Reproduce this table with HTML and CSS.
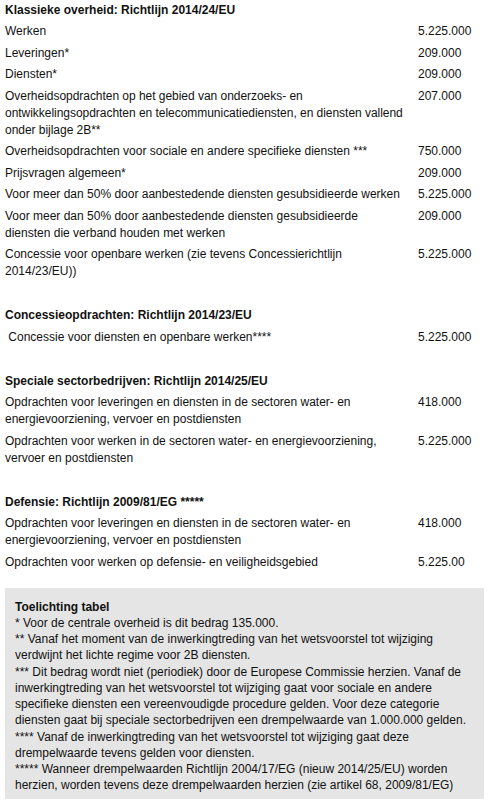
FILE: index.html
```html
<!DOCTYPE html>
<html lang="nl">
<head>
<meta charset="utf-8">
<title>Drempelwaarden</title>
<link rel="stylesheet" href="styles.css">
</head>
<body>
<div class="page">
  <table class="sect">
    <colgroup><col class="c1"><col class="c2"></colgroup>
    <tr class="head"><th colspan="2">Klassieke overheid: Richtlijn 2014/24/EU</th></tr>
    <tr><td class="lbl">Werken</td><td class="num">5.225.000</td></tr>
    <tr><td class="lbl">Leveringen*</td><td class="num">209.000</td></tr>
    <tr><td class="lbl">Diensten*</td><td class="num">209.000</td></tr>
    <tr><td class="lbl tight">Overheidsopdrachten op het gebied van onderzoeks- en ontwikkelingsopdrachten en telecommunicatiediensten, en diensten vallend onder bijlage 2B**</td><td class="num">207.000</td></tr>
    <tr><td class="lbl">Overheidsopdrachten voor sociale en andere specifieke diensten ***</td><td class="num">750.000</td></tr>
    <tr><td class="lbl">Prijsvragen algemeen*</td><td class="num">209.000</td></tr>
    <tr><td class="lbl">Voor meer dan 50% door aanbestedende diensten gesubsidieerde werken</td><td class="num">5.225.000</td></tr>
    <tr><td class="lbl">Voor meer dan 50% door aanbestedende diensten gesubsidieerde diensten die verband houden met werken</td><td class="num">209.000</td></tr>
    <tr><td class="lbl">Concessie voor openbare werken (zie tevens Concessierichtlijn 2014/23/EU))</td><td class="num">5.225.000</td></tr>
  </table>

  <table class="sect">
    <colgroup><col class="c1"><col class="c2"></colgroup>
    <tr class="head"><th colspan="2">Concessieopdrachten: Richtlijn 2014/23/EU</th></tr>
    <tr><td class="lbl">&nbsp;Concessie voor diensten en openbare werken****</td><td class="num">5.225.000</td></tr>
  </table>

  <table class="sect">
    <colgroup><col class="c1"><col class="c2"></colgroup>
    <tr class="head"><th colspan="2">Speciale sectorbedrijven: Richtlijn 2014/25/EU</th></tr>
    <tr><td class="lbl">Opdrachten voor leveringen en diensten in de sectoren water- en energievoorziening, vervoer en postdiensten</td><td class="num">418.000</td></tr>
    <tr><td class="lbl">Opdrachten voor werken in de sectoren water- en energievoorziening, vervoer en postdiensten</td><td class="num">5.225.000</td></tr>
  </table>

  <table class="sect last">
    <colgroup><col class="c1"><col class="c2"></colgroup>
    <tr class="head"><th colspan="2">Defensie: Richtlijn 2009/81/EG *****</th></tr>
    <tr><td class="lbl">Opdrachten voor leveringen en diensten in de sectoren water- en energievoorziening, vervoer en postdiensten</td><td class="num">418.000</td></tr>
    <tr><td class="lbl">Opdrachten voor werken op defensie- en veiligheidsgebied</td><td class="num">5.225.00</td></tr>
  </table>

  <div class="note">
    <strong>Toelichting tabel</strong><br>
    * Voor de centrale overheid is dit bedrag 135.000.<br>
    ** Vanaf het moment van de inwerkingtreding van het wetsvoorstel tot wijziging verdwijnt het lichte regime voor 2B diensten.<br>
    *** Dit bedrag wordt niet (periodiek) door de Europese Commissie herzien. Vanaf de inwerkingtreding van het wetsvoorstel tot wijziging gaat voor sociale en andere specifieke diensten een vereenvoudigde procedure gelden. Voor deze categorie diensten gaat bij speciale sectorbedrijven een drempelwaarde van 1.000.000 gelden.<br>
    **** Vanaf de inwerkingtreding van het wetsvoorstel tot wijziging gaat deze drempelwaarde tevens gelden voor diensten.<br>
    ***** Wanneer drempelwaarden Richtlijn 2004/17/EG (nieuw 2014/25/EU) worden herzien, worden tevens deze drempelwaarden herzien (zie artikel 68, 2009/81/EG)
  </div>
</div>
</body>
</html>
```
FILE: styles.css
```css
html, body {
  margin: 0;
  padding: 0;
  background: #ffffff;
}
body {
  font-family: "Liberation Sans", Arial, Helvetica, sans-serif;
  font-size: 12px;
  color: #111111;
}
.page {
  padding: 0 7px 0 5px;
}
.sect {
  width: 100%;
  border-collapse: collapse;
  table-layout: fixed;
  margin-bottom: 23.5px;
}
.sect.last {
  margin-bottom: 15px;
}
.c1 {
  width: 413px;
}
.sect th,
.sect td {
  padding: 2.5px 0 2px 0;
  line-height: 17px;
  vertical-align: top;
  text-align: left;
}
.sect .head th {
  font-weight: bold;
  padding-top: 1.5px;
}
.sect td.lbl {
  padding-right: 13px;
}
.sect td.tight {
  letter-spacing: -0.035px;
}
.num {
  white-space: nowrap;
}
.note {
  background: #e5e5e5;
  padding: 11px 10px 5px 10px;
  line-height: 16.25px;
}
.note strong {
  font-weight: bold;
}
```
